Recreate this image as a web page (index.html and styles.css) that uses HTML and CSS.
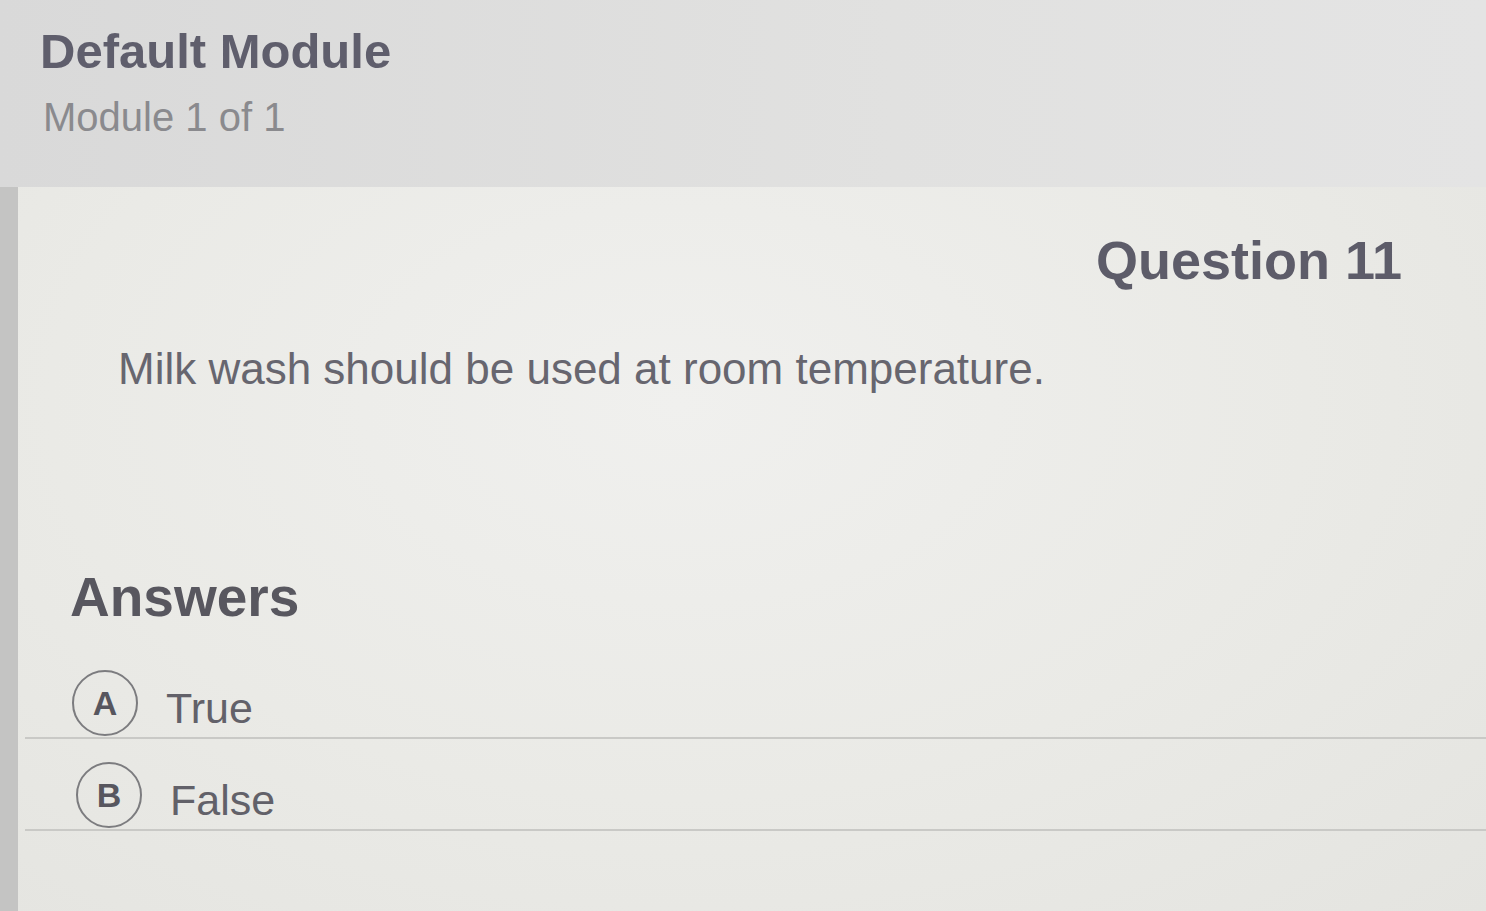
FILE: index.html
```html
<!DOCTYPE html>
<html lang="en">
<head>
    <meta charset="UTF-8">
    <meta name="viewport" content="width=device-width, initial-scale=1.0">
    <title>Default Module</title>
    <link rel="stylesheet" href="styles.css">
</head>
<body>
    <header class="module-header">
        <h1 class="module-title">Default Module</h1>
        <p class="module-count">Module 1 of 1</p>
    </header>

    <main class="question-card">
        <h2 class="question-number">Question 11</h2>
        <p class="question-text">Milk wash should be used at room temperature.</p>

        <h3 class="answers-title">Answers</h3>
        <ul class="answer-list">
            <li class="answer">
                <span class="answer-letter">A</span>
                <span class="answer-label">True</span>
            </li>
            <li class="answer">
                <span class="answer-letter">B</span>
                <span class="answer-label">False</span>
            </li>
        </ul>
    </main>
</body>
</html>
```

FILE: styles.css
```css
body {
    font-family: "Liberation Sans", Arial, sans-serif;
    background-color: #e6e6e3;
    margin: 0;
    min-height: 911px;
    display: flex;
    flex-direction: column;
}

/* top band with module name */
.module-header {
    background: linear-gradient(90deg, #d9d9d9 0%, #e1e1e0 60%, #e4e4e4 100%);
    padding: 23px 40px 46px;
}

.module-title {
    margin: 0;
    font-size: 49px;
    line-height: 56px;
    font-weight: 700;
    color: #5f5e6c;
}

.module-count {
    margin: 14px 0 0 3px;
    font-size: 40px;
    line-height: 48px;
    color: #8a8a8e;
}

/* question card */
.question-card {
    flex: 1;
    background: radial-gradient(ellipse at 45% 30%, #f0f0ee 0%, #eaeae6 55%, #e4e4e0 100%);
    border-left: 18px solid #c4c4c3;
    padding-top: 42px;
    padding-bottom: 40px;
}

.question-number {
    margin: 0;
    padding-right: 84px;
    text-align: right;
    font-size: 54px;
    line-height: 62px;
    font-weight: 700;
    color: #5d5c69;
}

.question-text {
    margin: 52px 0 0 100px;
    font-size: 44px;
    line-height: 52px;
    color: #67666f;
}

.answers-title {
    margin: 171px 0 0 52px;
    font-size: 55px;
    line-height: 62px;
    font-weight: 700;
    color: #58575f;
}

.answer-list {
    list-style: none;
    margin: 19px 0 0 7px;
    padding: 0;
}

.answer {
    display: flex;
    align-items: center;
    gap: 28px;
    padding: 23px 0 1px 47px;
    border-bottom: 2px solid #c9c9c6;
}

.answer + .answer {
    padding-left: 51px;
}

.answer-letter {
    width: 62px;
    height: 62px;
    border: 2px solid #7c7c7f;
    border-radius: 50%;
    display: flex;
    align-items: center;
    justify-content: center;
    font-size: 34px;
    font-weight: 700;
    color: #57565e;
}

.answer-label {
    padding-top: 10px;
    font-size: 43px;
    color: #626169;
}
```
